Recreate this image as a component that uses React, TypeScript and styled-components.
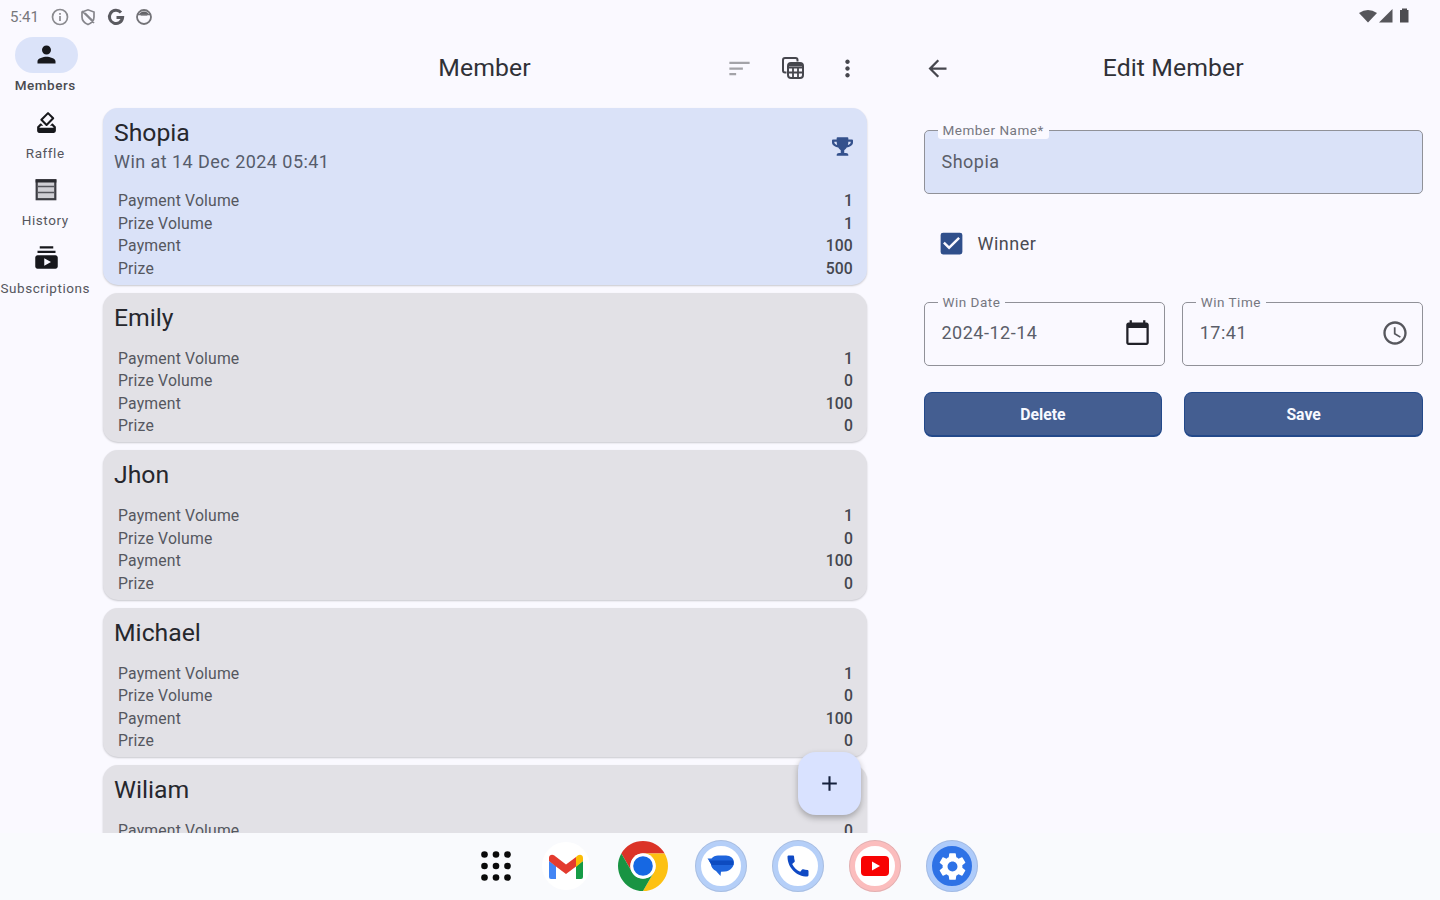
import React from 'react';
import styled, { createGlobalStyle } from 'styled-components';
import { MdPerson, MdHowToVote, MdSubscriptions, MdSort, MdMoreVert, MdArrowBack, MdCheckBox, MdCalendarToday, MdAccessTime, MdSettings, MdCall, MdAdd } from 'react-icons/md';
import { FaTrophy } from 'react-icons/fa';

const GlobalStyle = createGlobalStyle`
  * { box-sizing: border-box; }
  body { margin: 0; background: #faf9ff; font-family: Roboto, "Liberation Sans", sans-serif; color: #1a1b20; overflow: hidden; }
  svg { display: block; flex: none; }
`;

const Screen = styled.div`
  width: 1440px;
  height: 900px;
  display: flex;
  flex-direction: column;
  background: #faf9ff;
`;

const StatusBar = styled.header`
  height: 32px;
  flex: none;
  display: flex;
  align-items: center;
  justify-content: space-between;
  padding: 2px 29px 0 10px;
  color: #5f5f65;
`;

const StatusGroup = styled.div<{ $gap: number }>`
  display: flex;
  align-items: center;
  gap: ${(p) => p.$gap}px;
`;

const Clock = styled.span`
  width: 31px;
  font-size: 15px;
  color: #77777c;
`;

const Body = styled.div`
  flex: 1;
  min-height: 0;
  display: flex;
`;

const Rail = styled.nav`
  width: 102.5px;
  flex: none;
  display: flex;
  flex-direction: column;
  gap: 9px;
  padding: 4.5px 12px 0 0;
`;

const RailItem = styled.div<{ $active?: boolean }>`
  display: flex;
  flex-direction: column;
  align-items: center;
  gap: 3.5px;
  padding-bottom: 1px;
  font-size: 13.5px;
  line-height: 18px;
  letter-spacing: 0.55px;
  white-space: nowrap;
  font-weight: ${(p) => (p.$active ? 500 : 400)};
  color: ${(p) => (p.$active ? '#4a4b51' : '#55565d')};
`;

const RailIcon = styled.div<{ $active?: boolean }>`
  width: 63px;
  height: 36px;
  margin-left: 2px;
  border-radius: 18px;
  display: flex;
  align-items: center;
  justify-content: center;
  color: #17181c;
  background: ${(p) => (p.$active ? '#dbe3f9' : 'transparent')};
`;

const ListPane = styled.main`
  width: 764px;
  flex: none;
  position: relative;
  display: flex;
  flex-direction: column;
`;

const TopBar = styled.div`
  height: 72px;
  flex: none;
  display: grid;
  grid-template-columns: 1fr auto 1fr;
  align-items: center;
  color: #46474e;
`;

const Title = styled.h1`
  grid-column: 2;
  margin: 0;
  font-size: 24.75px;
  line-height: 32px;
  letter-spacing: 0.1px;
  font-weight: 400;
  color: #303137;
`;

const Actions = styled.div`
  display: flex;
  justify-content: flex-end;
  gap: 27px;
  padding-right: 6px;
`;

const List = styled.div`
  flex: 1;
  min-height: 0;
  display: flex;
  flex-direction: column;
  gap: 8px;
  padding: 4px 4px 0;
  margin: 0 -4px;
  overflow: hidden;
`;

const Card = styled.article<{ $winner?: boolean }>`
  flex: none;
  padding: 9px 13.5px 4.5px 11.5px;
  border-radius: 15px;
  background: ${(p) => (p.$winner ? '#dae2f8' : '#e2e1e6')};
  box-shadow: 0 1px 2px rgba(0, 0, 0, 0.2);
`;

const CardHead = styled.div`
  display: flex;
  justify-content: space-between;
  align-items: center;
  margin-bottom: 14.5px;
  color: #34518c;
`;

const Name = styled.div`
  font-size: 24.75px;
  line-height: 31.5px;
  color: #26272d;
`;

const WinDate = styled.div`
  margin-top: -1px;
  padding-bottom: 1px;
  font-size: 18px;
  line-height: 27px;
  letter-spacing: 0.45px;
  color: #565c6b;
`;

const Row = styled.div`
  display: flex;
  justify-content: space-between;
  padding-left: 4px;
  font-size: 15.75px;
  line-height: 22.5px;
  letter-spacing: 0.17px;
  color: #55575f;
`;

const Value = styled.span`
  font-weight: 500;
  color: #45474f;
`;

const Fab = styled.button`
  position: absolute;
  right: 6px;
  bottom: 18px;
  width: 63px;
  height: 63px;
  border: 0;
  padding: 0;
  border-radius: 18px;
  display: flex;
  align-items: center;
  justify-content: center;
  color: #15203c;
  background: #d9e2ff;
  box-shadow: 0 3px 6px rgba(0, 0, 0, 0.28);
`;

const EditPane = styled.aside`
  flex: 1;
  display: flex;
  flex-direction: column;
  padding: 0 17px 0 57px;
`;

const Field = styled.div<{ $filled?: boolean }>`
  position: relative;
  flex: 1;
  height: 64px;
  display: flex;
  align-items: center;
  justify-content: space-between;
  padding: 0 13px 2px 17px;
  border: 1.5px solid #909198;
  border-radius: 5px;
  font-size: 18px;
  letter-spacing: 0.5px;
  color: #5b5e69;
  background: ${(p) => (p.$filled ? '#dae2f8' : 'transparent')};
`;

const Label = styled.span`
  position: absolute;
  left: 13px;
  top: -10px;
  padding: 0 5px;
  border-radius: 3px;
  font-size: 13.5px;
  line-height: 18px;
  color: #76777f;
  background: #faf9ff;
`;

const FieldRow = styled.div<{ $top: number; $gap?: number }>`
  display: flex;
  flex: none;
  gap: ${(p) => p.$gap ?? 0}px;
  margin-top: ${(p) => p.$top}px;
`;

const CheckRow = styled.label`
  display: flex;
  align-items: center;
  gap: 12px;
  height: 30px;
  margin-top: 34px;
  padding-left: 13px;
  font-size: 18px;
  letter-spacing: 0.5px;
  color: #4a4b52;
`;

const Button = styled.button`
  flex: 1;
  height: 45px;
  padding: 0;
  border: 1.5px solid #23498a;
  border-bottom-width: 2px;
  border-radius: 8px;
  font: 700 15.75px Roboto, sans-serif;
  color: #f7f9ff;
  background: #445e91;
`;

const Dock = styled.footer`
  flex: none;
  height: 67px;
  display: flex;
  align-items: center;
  padding: 0 0 1px 480px;
  gap: 25.25px;
  background: #f9fafd;
`;

const DockLauncher = styled.div`
  width: 32px;
`;

const GmailDisc = styled.div`
  width: 48px;
  height: 48px;
  margin: 0 2px 0 5px;
  transform: none;
  margin-left: 4.75px;
  border-radius: 50%;
  display: flex;
  align-items: center;
  justify-content: center;
  background: #fff;
`;

const DockApp = styled.div<{ $ring: string; $fill?: string; $color?: string }>`
  width: 52px;
  height: 52px;
  border-radius: 50%;
  display: flex;
  align-items: center;
  justify-content: center;
  border: 6px solid ${(p) => p.$ring};
  outline: 1px solid rgba(120, 120, 130, 0.2);
  outline-offset: -1px;
  color: ${(p) => p.$color ?? '#fff'};
  background: ${(p) => p.$fill ?? '#fff'};
`;

const ChromeBox = styled.div`
  width: 52px;
  height: 52px;
`;

const TableRowsIcon = () => (
  <svg width="24" height="24" viewBox="0 0 24 24">
    <rect x="2.7" y="2.2" width="18.6" height="19" fill="#cfcfd4" stroke="#3c3d43" strokeWidth="2.2" />
    <path d="M1.6 3h20.800" stroke="#2a2b30" strokeWidth="3" />
    <path d="M4 8.500h16M4 14.500h16" stroke="#55565c" strokeWidth="1.600" />
  </svg>
);

const CopyTableIcon = () => (
  <svg width="27" height="27" viewBox="0 0 27 27" fill="none" stroke="currentColor" strokeWidth="2">
    <path d="M6.500 17.500H5a2 2 0 0 1-2-2V5a2 2 0 0 1 2-2h10.500a2 2 0 0 1 2 2v1.500" />
    <rect x="8" y="8" width="15" height="15" rx="3" />
    <path d="M8 12.500h15M8 17.500h15M13 12.500v11M18 12.500v11" strokeWidth="1.800" />
    <path d="M8 10h15" strokeWidth="2.500" />
  </svg>
);

const InfoIcon = () => (
  <svg width="18" height="18" viewBox="0 0 18 18" fill="none" stroke="#8a8a8f" strokeWidth="1.700">
    <circle cx="9" cy="9" r="7.500" />
    <path d="M9 8v5M9 5v1.700" />
  </svg>
);

const ShieldOffIcon = () => (
  <svg width="18" height="18" viewBox="0 0 18 18" fill="none" stroke="#86868c" strokeWidth="1.700">
    <path d="M3 4l6-2.200L15 4v5c0 3.500-2.500 6-6 7.500C5.500 15 3 12.500 3 9zM3 3l12 12M6 5l7 7" />
  </svg>
);

const GoogleIcon = () => (
  <svg width="18" height="18" viewBox="0 0 18 18" fill="none" stroke="#5a5a60" strokeWidth="3">
    <path d="M14 4.500A6.600 6.600 0 1 0 15.600 9.500H9.500" />
  </svg>
);

const FaceIcon = () => (
  <svg width="18" height="18" viewBox="0 0 18 18">
    <circle cx="9" cy="9" r="7" fill="none" stroke="#737378" strokeWidth="1.800" />
    <path d="M4.500 6C5.500 2.500 12.500 2.500 13.500 6L12 7.500H6z" fill="#626267" />
    <path d="M2 6.500h14" stroke="#737378" strokeWidth="1.500" />
  </svg>
);

const SignalIcons = () => (
  <svg width="52" height="18" viewBox="0 0 52 18" fill="#56565b">
    <path d="M0 5Q9 -1 18 5L9 14.500z" />
    <path d="M20 14.500h13.500V1z" />
    <path d="M41 2h2V.500h5V2h1.500v12.500H41z" fill="#4d4d51" />
  </svg>
);

const GridDots = () => (
  <svg width="32" height="32" viewBox="0 0 32 32">
    {[4.5, 16, 27.5].flatMap((y) => [4.5, 16, 27.5].map((x) => <circle key={`${x}-${y}`} cx={x} cy={y} r="3.300" fill="#0a0a0a" />))}
  </svg>
);

const GmailIcon = () => (
  <svg width="34" height="26" viewBox="0 0 34 26">
    <path d="M0 8l7 5v13H2a2 2 0 0 1-2-2z" fill="#4285f4" />
    <path d="M34 8l-7 5v13h5a2 2 0 0 0 2-2z" fill="#169c46" />
    <path d="M27 4l2-1.700c2-1.500 5-.3 5 2.500V8l-7 6z" fill="#fbbc04" />
    <path d="M0 8V4.800c0-2.800 3-4 5-2.500L17 11.500 27 4v9.500l-10 7.500L7 13.500z" fill="#e33b2e" />
  </svg>
);

const ChromeIcon = () => (
  <svg width="52" height="52" viewBox="0 0 52 52">
    <path d="M4.350 13.500A25 25 0 0 1 47.650 13.500H26a12.500 12.500 0 0 0-10.830 18.750z" fill="#db3327" />
    <path d="M47.650 13.500A25 25 0 0 1 26 51l10.830-18.750A12.500 12.500 0 0 0 26 13.500z" fill="#fdc113" />
    <path d="M26 51A25 25 0 0 1 4.350 13.500l10.820 18.750a12.500 12.500 0 0 0 21.660 0z" fill="#199443" />
    <circle cx="26" cy="26" r="12.700" fill="#fff" />
    <circle cx="26" cy="26" r="9.800" fill="#1668e3" />
  </svg>
);

const MessagesIcon = () => (
  <svg width="28" height="26" viewBox="0 0 28 26">
    <path d="M.5 5.500h4C6 3.500 8.500 2.500 11 2.500h8c4.500 0 8 3 8 7s-3.500 8.500-9 9l-4 .2-.5 4.300-4.500-5C6 16.500 4 14 3.800 10.500z" fill="#1f65dc" />
    <path d="M2 7.500h24l.5 4.500h-22z" fill="#0d4bc0" />
  </svg>
);

const YoutubeIcon = () => (
  <svg width="28" height="20" viewBox="0 0 28 20">
    <rect width="28" height="20" rx="4" fill="#f80303" />
    <path d="M11 5.500v9l8-4.500z" fill="#fff" />
  </svg>
);

type Member = { name: string; won?: string; values: number[] };

const members: Member[] = [
  { name: 'Shopia', won: 'Win at 14 Dec 2024 05:41', values: [1, 1, 100, 500] },
  { name: 'Emily', values: [1, 0, 100, 0] },
  { name: 'Jhon', values: [1, 0, 100, 0] },
  { name: 'Michael', values: [1, 0, 100, 0] },
  { name: 'Wiliam', values: [0, 0, 100, 0] },
];

const rowLabels = ['Payment Volume', 'Prize Volume', 'Payment', 'Prize'];

const MemberCard = ({ member }: { member: Member }) => (
  <Card $winner={!!member.won}>
    <CardHead>
      <div>
        <Name>{member.name}</Name>
        {member.won && <WinDate>{member.won}</WinDate>}
      </div>
      {member.won && <FaTrophy size={21} />}
    </CardHead>
    {rowLabels.map((label, i) => (
      <Row key={label}>
        <span>{label}</span>
        <Value>{member.values[i]}</Value>
      </Row>
    ))}
  </Card>
);

export default function App() {
  return (
    <Screen>
      <GlobalStyle />
      <StatusBar>
        <StatusGroup $gap={10}>
          <Clock>5:41</Clock>
          <InfoIcon />
          <ShieldOffIcon />
          <GoogleIcon />
          <FaceIcon />
        </StatusGroup>
        <SignalIcons />
      </StatusBar>
      <Body>
        <Rail>
          <RailItem $active>
            <RailIcon $active><MdPerson size={27} /></RailIcon>
            Members
          </RailItem>
          <RailItem>
            <RailIcon><MdHowToVote size={25} /></RailIcon>
            Raffle
          </RailItem>
          <RailItem>
            <RailIcon><TableRowsIcon /></RailIcon>
            History
          </RailItem>
          <RailItem>
            <RailIcon><MdSubscriptions size={27} /></RailIcon>
            Subscriptions
          </RailItem>
        </Rail>
        <ListPane>
          <TopBar>
            <Title>Member</Title>
            <Actions>
              <MdSort size={27} color="#a3a3a8" />
              <CopyTableIcon />
              <MdMoreVert size={27} />
            </Actions>
          </TopBar>
          <List>
            {members.map((m) => <MemberCard key={m.name} member={m} />)}
          </List>
          <Fab><MdAdd size={25} /></Fab>
        </ListPane>
        <EditPane>
          <TopBar>
            <MdArrowBack size={27} />
            <Title>Edit Member</Title>
          </TopBar>
          <FieldRow $top={26}>
            <Field $filled><Label>Member Name*</Label>Shopia</Field>
          </FieldRow>
          <CheckRow>
            <MdCheckBox size={29} color="#2f4f8b" />
            Winner
          </CheckRow>
          <FieldRow $top={43.5} $gap={17}>
            <Field><Label>Win Date</Label>2024-12-14<MdCalendarToday size={27} color="#202128" /></Field>
            <Field><Label>Win Time</Label>17:41<MdAccessTime size={28} color="#56575d" /></Field>
          </FieldRow>
          <FieldRow $top={26.5} $gap={22}>
            <Button>Delete</Button>
            <Button>Save</Button>
          </FieldRow>
        </EditPane>
      </Body>
      <Dock>
        <DockLauncher><GridDots /></DockLauncher>
        <GmailDisc><GmailIcon /></GmailDisc>
        <ChromeBox><ChromeIcon /></ChromeBox>
        <DockApp $ring="#b5cff8"><MessagesIcon /></DockApp>
        <DockApp $ring="#b5cff8" $color="#0f49c4"><MdCall size={28} /></DockApp>
        <DockApp $ring="#fbbdbd"><YoutubeIcon /></DockApp>
        <DockApp $ring="#aecbfa" $fill="#2e72e6"><MdSettings size={33} /></DockApp>
      </Dock>
    </Screen>
  );
}
